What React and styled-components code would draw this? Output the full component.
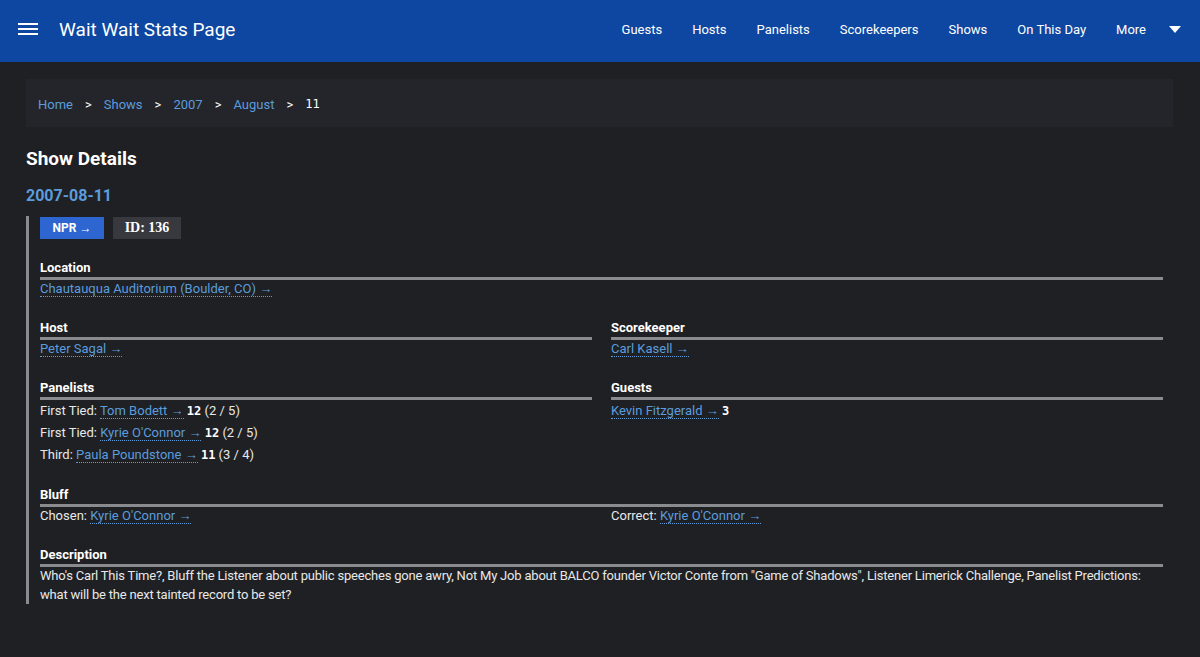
import React from 'react';
import styled, { createGlobalStyle } from 'styled-components';

const GlobalStyle = createGlobalStyle`
  html, body {
    margin: 0;
    padding: 0;
    background: #1f2023;
    color: #e8e8e8;
    font-family: Roboto, "Noto Sans", sans-serif;
  }
  * { box-sizing: border-box; }
`;

const Page = styled.div`
  min-height: 657px;
  background: #1f2023;
`;

// header
const Header = styled.header`
  height: 62px;
  background: #0e47a1;
  display: flex;
  align-items: center;
  padding: 0 19px 4px 18px;
`;
const Burger = styled.div`
  width: 20px;
  display: flex;
  flex-direction: column;
  gap: 3px;
  margin-right: 21px;
  span {
    display: block;
    height: 2px;
    background: #fff;
  }
`;
const Brand = styled.div`
  font-size: 19px;
  color: #fff;
  flex: 1;
`;
const Nav = styled.nav`
  display: flex;
  align-items: center;
  gap: 30px;
`;
const NavItem = styled.a`
  color: #fff;
  font-size: 13px;
  display: flex;
  align-items: center;
`;
const Caret = styled.span`
  display: inline-block;
  width: 0;
  height: 0;
  border-left: 6px solid transparent;
  border-right: 6px solid transparent;
  border-top: 7px solid #fff;
  margin-left: 23px;
`;

const Main = styled.main`
  padding: 17px 27px 0 26px;
`;

// breadcrumb
const Breadcrumb = styled.div`
  background: #24252a;
  height: 48px;
  padding: 2px 12px 0;
  display: flex;
  align-items: center;
  gap: 12px;
  font-size: 13px;
`;
const Crumb = styled.a`
  color: #5b9cdd;
`;
const Sep = styled.span`
  color: #fff;
`;
const Current = styled.span`
  color: #fff;
  font-family: "DejaVu Sans Mono", monospace;
  font-size: 12px;
`;

const Title = styled.h2`
  font-size: 19px;
  font-weight: 700;
  color: #fff;
  margin: 20px 0 0;
`;
const ShowDate = styled.h3`
  font-size: 16px;
  font-weight: 700;
  color: #5b9cdd;
  margin: 16px 0 0;
`;

// details block
const Details = styled.div`
  margin-top: 11px;
  border-left: 3px solid #8a8b8e;
  padding: 1px 10px 0 11px;
`;
const Badges = styled.div`
  display: flex;
  gap: 9px;
  margin-bottom: 21px;
`;
const Badge = styled.span`
  height: 22px;
  min-width: ${(p) => (p.primary ? '64px' : '68px')};
  justify-content: center;
  display: inline-flex;
  align-items: center;
  font-size: ${(p) => (p.primary ? '12px' : '14px')};
  font-weight: 700;
  color: #fff;
  background: ${(p) => (p.primary ? '#2d66d0' : '#38393e')};
  font-family: ${(p) => (p.primary ? 'Roboto, sans-serif' : '"Liberation Serif", serif')};
`;

const Row = styled.div`
  display: grid;
  grid-template-columns: 1fr 1fr;
  column-gap: 19px;
`;
const Section = styled.div`
  margin-bottom: ${(p) => p.gap ?? 22}px;
`;
const Label = styled.div`
  font-size: 13px;
  font-weight: 700;
  color: #fff;
  line-height: 16px;
  padding-bottom: 1px;
  border-bottom: 3px solid #8a8b8e;
`;
const Line = styled.div`
  font-size: 13px;
  line-height: ${(p) => (p.list ? '22px' : '18px')};
  color: #e8e8e8;
`;
const Desc = styled.div`
  font-size: 13px;
  line-height: 19px;
  color: #e8e8e8;
  letter-spacing: -0.2px;
  margin-top: -1px;
`;
const Link = styled.a`
  color: #5b9cdd;
  text-decoration: none;
  border-bottom: 1px dotted #5b9cdd;
`;
const Score = styled.span`
  color: #fff;
  font-family: "DejaVu Sans Mono", monospace;
  font-size: 12px;
  font-weight: 700;
`;

const Person = ({ name }) => <Link>{name} →</Link>;

const panelists = [
  { rank: 'First Tied', name: 'Tom Bodett', score: '12', extra: '(2 / 5)' },
  { rank: 'First Tied', name: "Kyrie O'Connor", score: '12', extra: '(2 / 5)' },
  { rank: 'Third', name: 'Paula Poundstone', score: '11', extra: '(3 / 4)' },
];

const navItems = ['Guests', 'Hosts', 'Panelists', 'Scorekeepers', 'Shows', 'On This Day'];

const App = () => (
  <Page>
    <GlobalStyle />
    <Header>
      <Burger>
        <span />
        <span />
        <span />
      </Burger>
      <Brand>Wait Wait Stats Page</Brand>
      <Nav>
        {navItems.map((n) => (
          <NavItem key={n}>{n}</NavItem>
        ))}
        <NavItem>
          More
          <Caret />
        </NavItem>
      </Nav>
    </Header>
    <Main>
      <Breadcrumb>
        <Crumb>Home</Crumb>
        <Sep>&gt;</Sep>
        <Crumb>Shows</Crumb>
        <Sep>&gt;</Sep>
        <Crumb>2007</Crumb>
        <Sep>&gt;</Sep>
        <Crumb>August</Crumb>
        <Sep>&gt;</Sep>
        <Current>11</Current>
      </Breadcrumb>
      <Title>Show Details</Title>
      <ShowDate>2007-08-11</ShowDate>
      <Details>
        <Badges>
          <Badge primary>NPR →</Badge>
          <Badge>ID: 136</Badge>
        </Badges>
        <Section>
          <Label>Location</Label>
          <Line>
            <Person name="Chautauqua Auditorium (Boulder, CO)" />
          </Line>
        </Section>
        <Row>
          <Section>
            <Label>Host</Label>
            <Line>
              <Person name="Peter Sagal" />
            </Line>
          </Section>
          <Section>
            <Label>Scorekeeper</Label>
            <Line>
              <Person name="Carl Kasell" />
            </Line>
          </Section>
        </Row>
        <Row>
          <Section gap={21}>
            <Label>Panelists</Label>
            {panelists.map((p) => (
              <Line list key={p.name}>
                {p.rank}: <Person name={p.name} /> <Score>{p.score}</Score> {p.extra}
              </Line>
            ))}
          </Section>
          <Section gap={21}>
            <Label>Guests</Label>
            <Line list>
              <Person name="Kevin Fitzgerald" /> <Score>3</Score>
            </Line>
          </Section>
        </Row>
        <Section>
          <Label>Bluff</Label>
          <Row>
            <Line>
              Chosen: <Person name="Kyrie O'Connor" />
            </Line>
            <Line>
              Correct: <Person name="Kyrie O'Connor" />
            </Line>
          </Row>
        </Section>
        <Section gap={0}>
          <Label>Description</Label>
          <Desc>
            Who's Carl This Time?, Bluff the Listener about public speeches gone awry, Not My Job about BALCO
            founder Victor Conte from "Game of Shadows", Listener Limerick Challenge, Panelist Predictions:
            what will be the next tainted record to be set?
          </Desc>
        </Section>
      </Details>
    </Main>
  </Page>
);

export default App;
